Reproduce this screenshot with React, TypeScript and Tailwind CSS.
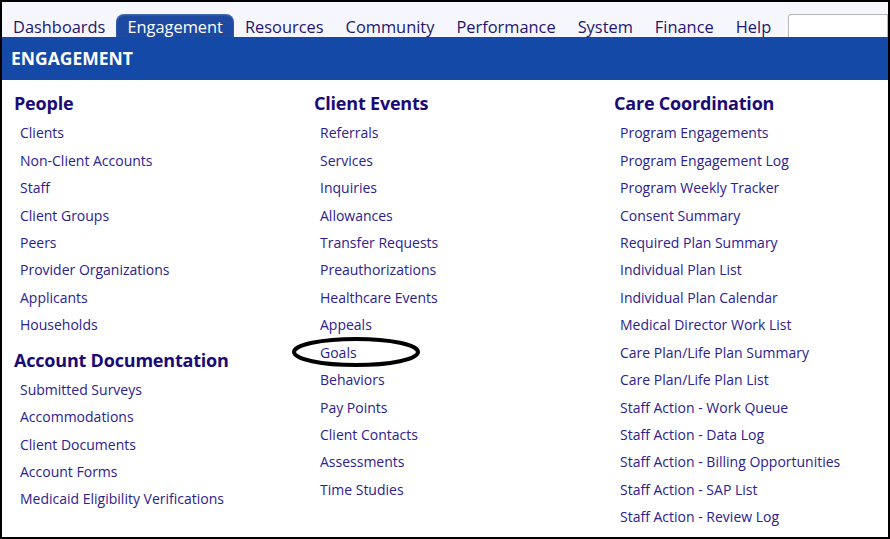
const navItems = ['Dashboards', 'Engagement', 'Resources', 'Community', 'Performance', 'System', 'Finance', 'Help'];

type Section = { title: string; links: string[] };

const columns: Section[][] = [
    [
        {
            title: 'People',
            links: ['Clients', 'Non-Client Accounts', 'Staff', 'Client Groups', 'Peers', 'Provider Organizations', 'Applicants', 'Households'],
        },
        {
            title: 'Account Documentation',
            links: ['Submitted Surveys', 'Accommodations', 'Client Documents', 'Account Forms', 'Medicaid Eligibility Verifications'],
        },
    ],
    [
        {
            title: 'Client Events',
            links: [
                'Referrals',
                'Services',
                'Inquiries',
                'Allowances',
                'Transfer Requests',
                'Preauthorizations',
                'Healthcare Events',
                'Appeals',
                'Goals',
                'Behaviors',
                'Pay Points',
                'Client Contacts',
                'Assessments',
                'Time Studies',
            ],
        },
    ],
    [
        {
            title: 'Care Coordination',
            links: [
                'Program Engagements',
                'Program Engagement Log',
                'Program Weekly Tracker',
                'Consent Summary',
                'Required Plan Summary',
                'Individual Plan List',
                'Individual Plan Calendar',
                'Medical Director Work List',
                'Care Plan/Life Plan Summary',
                'Care Plan/Life Plan List',
                'Staff Action - Work Queue',
                'Staff Action - Data Log',
                'Staff Action - Billing Opportunities',
                'Staff Action - SAP List',
                'Staff Action - Review Log',
            ],
        },
    ],
];

function Circled() {
    // hand-drawn ellipse marking the "Goals" link
    return (
        <svg
            className="absolute left-[-28px] top-1/2 -translate-y-1/2 pointer-events-none"
            width="130"
            height="32"
            viewBox="0 0 130 32"
        >
            <ellipse cx="64" cy="16" rx="62" ry="13" fill="none" stroke="#000" strokeWidth="4" />
        </svg>
    );
}

export default function App() {
    return (
        <div
            className="w-[890px] h-[539px] overflow-hidden border-2 border-black bg-white flex flex-col"
            style={{ fontFamily: '"Open Sans", "Noto Sans", sans-serif' }}
        >
            {/* top nav */}
            <div className="h-[35px] shrink-0 bg-[#f6f7fd] flex items-end">
                {navItems.map((item) =>
                    item === 'Engagement' ? (
                        <div
                            key={item}
                            className="h-[23px] px-[11px] pt-[3px] flex items-center rounded-t-[8px] bg-[#1d4aa0] text-white text-[16.4px] leading-none shadow-[inset_0_1px_2px_rgba(255,255,255,0.25)]"
                        >
                            {item}
                        </div>
                    ) : (
                        <div key={item} className="h-[23px] px-[11px] pt-[3px] flex items-center text-[#1f1570] text-[16.4px] leading-none">
                            {item}
                        </div>
                    )
                )}
                <div className="ml-[6px] h-[23px] flex-1 border border-b-0 border-[#b8b8b8] rounded-tl-[3px] bg-white" />
            </div>

            {/* section band */}
            <div className="h-[43px] shrink-0 bg-[#1449a8] flex items-center px-[9px] text-white font-bold text-[17.5px]">
                ENGAGEMENT
            </div>

            {/* menu columns */}
            <div className="flex pl-[12px] pt-[8px]">
                {columns.map((col, ci) => (
                    <div key={ci} className="w-[300px] shrink-0 flex flex-col">
                        {col.map((sec, si) => (
                            <div key={sec.title} className={si > 0 ? 'mt-[7px]' : ''}>
                                <div
                                    className={`${si > 0 ? 'h-[30px]' : 'h-[31px]'} flex items-center text-[18px] font-bold text-[#1a0a78] tracking-[-0.2px]`}
                                >
                                    {sec.title}
                                </div>
                                <ul className="pl-[6px]">
                                    {sec.links.map((l) => (
                                        <li key={l} className="h-[27.45px] flex items-center text-[14px] text-[#2b2190]">
                                            {l === 'Goals' ? (
                                                <span className="relative">
                                                    <Circled />
                                                    {l}
                                                </span>
                                            ) : (
                                                l
                                            )}
                                        </li>
                                    ))}
                                </ul>
                            </div>
                        ))}
                    </div>
                ))}
            </div>
        </div>
    );
}
